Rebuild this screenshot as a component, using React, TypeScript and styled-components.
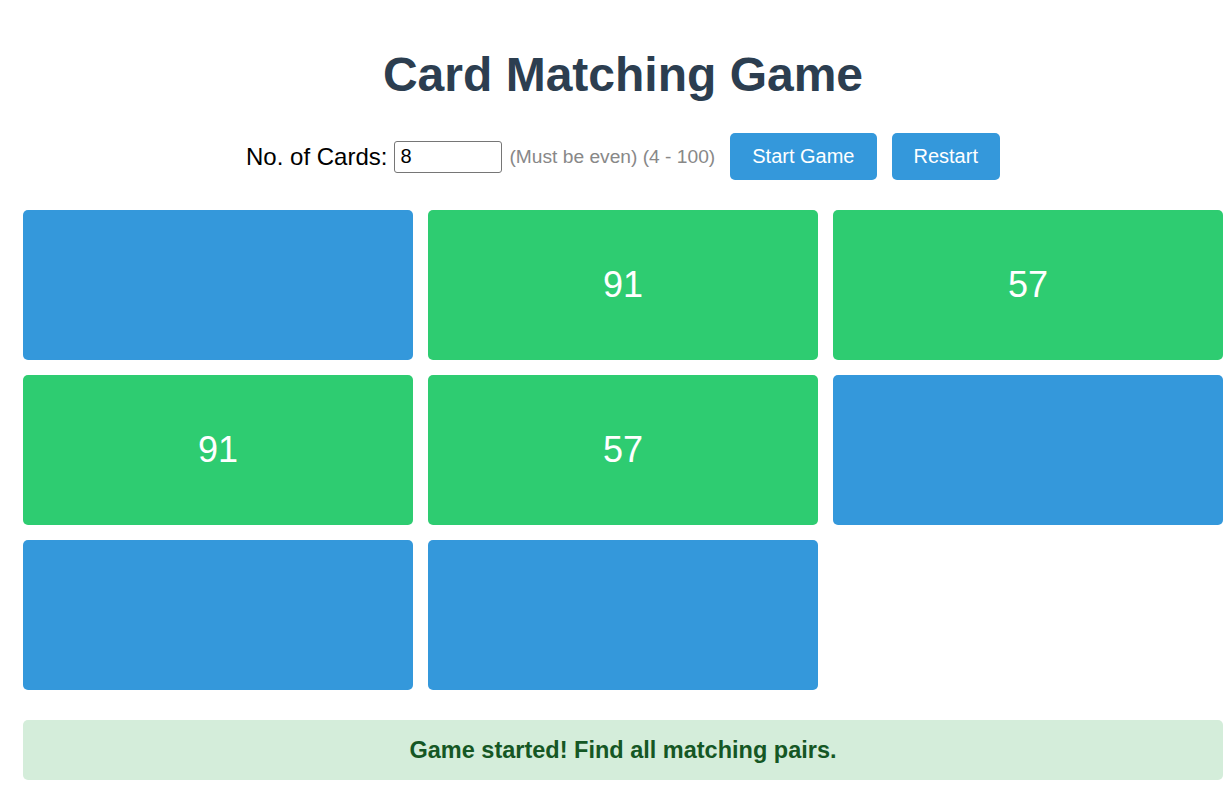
import React from "react";
import styled, { createGlobalStyle } from "styled-components";

const Global = createGlobalStyle`
  body {
    margin: 0;
    background: #ffffff;
    font-family: "Liberation Sans", Arial, sans-serif;
  }
`;

const Page = styled.div`
  padding: 0 8px 20px 23px;
  display: flex;
  flex-direction: column;
  align-items: stretch;
`;

const Title = styled.h1`
  margin: 46px 0 0;
  height: 58px;
  line-height: 58px;
  text-align: center;
  font-size: 48px;
  font-weight: 700;
  color: #2c3e50;
`;

const Controls = styled.div`
  margin-top: 29px;
  height: 47px;
  display: flex;
  align-items: center;
  justify-content: center;
`;

const Label = styled.label`
  font-size: 24px;
  color: #000;
  margin-right: 7px;
`;

const Input = styled.input`
  box-sizing: border-box;
  width: 108px;
  height: 32px;
  padding: 1px 5px;
  font-family: "Liberation Sans", Arial, sans-serif;
  font-size: 20px;
  color: #000;
  border: 1px solid #767676;
  border-radius: 3px;
  margin-right: 7px;
`;

const Hint = styled.span`
  font-size: 19.2px;
  color: #888888;
  margin-right: 15px;
`;

const Button = styled.button`
  box-sizing: border-box;
  height: 47px;
  padding: 0 22px;
  border: none;
  border-radius: 5px;
  background: #3498db;
  color: #ffffff;
  font-family: "Liberation Sans", Arial, sans-serif;
  font-size: 20px;
  cursor: pointer;
  & + & {
    margin-left: 15px;
  }
`;

const Grid = styled.div`
  margin-top: 30px;
  display: grid;
  grid-template-columns: repeat(3, 390px);
  grid-auto-rows: 150px;
  gap: 15px;
`;

const Card = styled.div<{ $open: boolean }>`
  border-radius: 5px;
  background: ${(p) => (p.$open ? "#2ecc71" : "#3498db")};
  color: #ffffff;
  display: flex;
  align-items: center;
  justify-content: center;
  font-size: 36px;
`;

const Status = styled.div`
  margin-top: 30px;
  height: 60px;
  border-radius: 5px;
  background: #d4edda;
  color: #155724;
  font-size: 23.5px;
  font-weight: 700;
  display: flex;
  align-items: center;
  justify-content: center;
`;

const cards: { value: number; open: boolean }[] = [
  { value: 12, open: false },
  { value: 91, open: true },
  { value: 57, open: true },
  { value: 91, open: true },
  { value: 57, open: true },
  { value: 33, open: false },
  { value: 12, open: false },
  { value: 33, open: false },
];

export default function App() {
  return (
    <>
      <Global />
      <Page>
        <Title>Card Matching Game</Title>
        <Controls>
          <Label htmlFor="count">No. of Cards:</Label>
          <Input id="count" type="text" defaultValue="8" />
          <Hint>(Must be even) (4 - 100)</Hint>
          <Button>Start Game</Button>
          <Button>Restart</Button>
        </Controls>
        <Grid>
          {cards.map((c, i) => (
            <Card key={i} $open={c.open}>
              {c.open ? c.value : ""}
            </Card>
          ))}
        </Grid>
        <Status>Game started! Find all matching pairs.</Status>
      </Page>
    </>
  );
}
